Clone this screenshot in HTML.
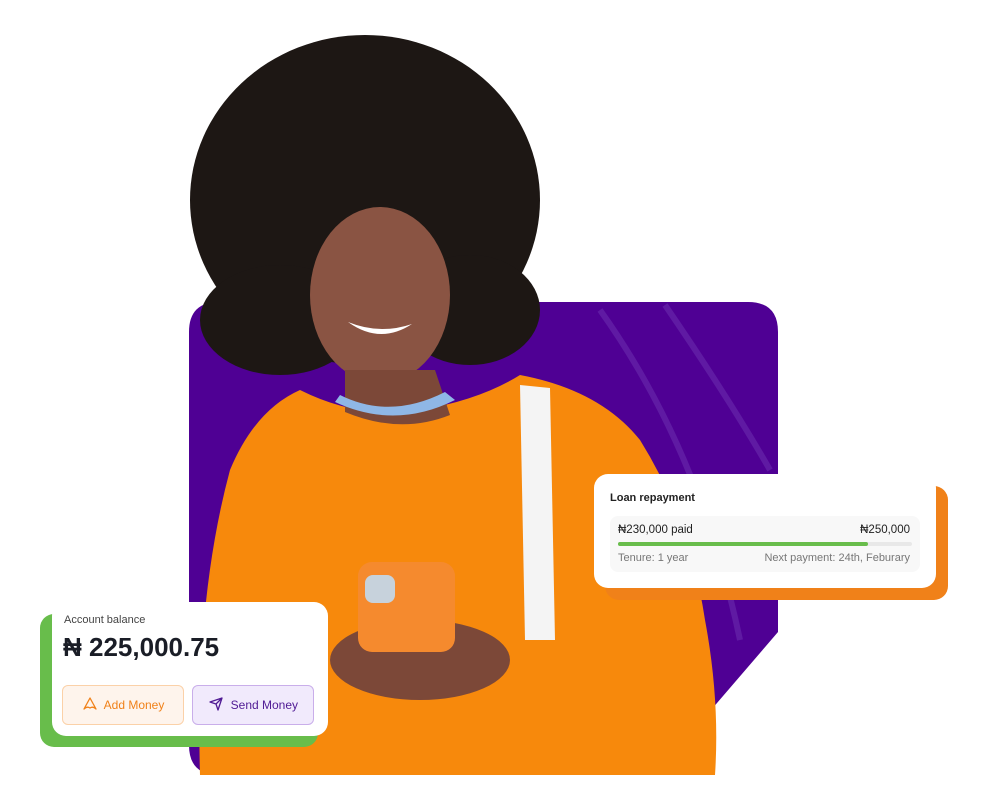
<!DOCTYPE html>
<html><head><style>
body{margin:0;width:999px;height:789px;background:#fff;position:relative;overflow:hidden;font-family:"Liberation Sans",sans-serif}
.a{position:absolute}
</style></head><body>
<svg class="a" style="left:0;top:0" width="999" height="789">
<path d="M219 302 H748 Q778 302 778 332 V632 L668 760 Q656 775 640 775 H219 Q189 775 189 745 V332 Q189 302 219 302Z" fill="#4f0094"/>
<path d="M600 310 Q700 450 740 640" stroke="#6a2cad" stroke-width="6" fill="none" opacity=".6"/>
<path d="M665 305 Q730 400 770 470" stroke="#6a2cad" stroke-width="6" fill="none" opacity=".6"/>
<path d="M300 390 Q360 420 420 410 Q480 400 520 375 Q600 390 640 440 Q690 520 705 620 Q720 700 715 775 H200 Q195 600 230 470 Q255 410 300 390Z" fill="#f7890c"/>
<path d="M520 385 L550 388 L555 640 L525 640Z" fill="#f4f4f4"/>
<ellipse cx="365" cy="200" rx="175" ry="165" fill="#1d1714"/>
<ellipse cx="280" cy="320" rx="80" ry="55" fill="#1d1714"/>
<ellipse cx="470" cy="310" rx="70" ry="55" fill="#1d1714"/>
<ellipse cx="380" cy="295" rx="70" ry="88" fill="#8a5443"/>
<path d="M348 322 Q380 345 412 324 Q380 335 348 322Z" fill="#fff"/>
<path d="M345 370 L435 370 L450 415 Q400 435 345 412Z" fill="#7c4838"/>
<path d="M340 395 Q390 420 445 392 L455 400 Q395 430 335 402Z" fill="#8fb7e6"/>
<ellipse cx="420" cy="660" rx="90" ry="40" fill="#7c4838"/>
<rect x="358" y="562" width="97" height="90" rx="14" fill="#f58a2e"/>
<rect x="365" y="575" width="30" height="28" rx="8" fill="#c7d2dc"/>
<rect x="40" y="614" width="278" height="133" rx="14" fill="#68bd4b"/>
<rect x="605" y="486" width="343" height="114" rx="14" fill="#f08119"/>
</svg>
<div class="a" style="left:52px;top:602px;width:276px;height:134px;background:#fff;border-radius:14px">
<div class="a" style="left:12px;top:12px;font-size:11px;color:#444">Account balance</div>
<div class="a" style="left:11px;top:30px;font-size:26px;font-weight:bold;color:#1a1d26">₦ 225,000.75</div>
<div class="a" style="left:10px;top:83px;width:120px;height:38px;border:1px solid #fbd1a8;background:#fef4ec;border-radius:6px;color:#f08119;font-size:12px;line-height:38px;text-align:center"><svg width="16" height="16" viewBox="0 0 16 16" style="vertical-align:-3px"><path d="M8 2 L14 13 Q11 10 8 12 Q5 10 2 13 Z" fill="none" stroke="#f08119" stroke-width="1.3" stroke-linejoin="round"/></svg>&nbsp; Add Money</div>
<div class="a" style="left:140px;top:83px;width:120px;height:38px;border:1px solid #c9aeea;background:#f1eafc;border-radius:6px;color:#4f1a94;font-size:12px;line-height:38px;text-align:center"><svg width="16" height="16" viewBox="0 0 16 16" style="vertical-align:-3px"><path d="M2 6 L14 2 L10 14 L8 8 Z M8 8 L14 2" fill="none" stroke="#4f1a94" stroke-width="1.3" stroke-linejoin="round"/></svg>&nbsp; Send Money</div>
</div>
<div class="a" style="left:594px;top:474px;width:342px;height:114px;background:#fff;border-radius:14px">
<div class="a" style="left:16px;top:18px;font-size:11px;font-weight:bold;color:#222">Loan repayment</div>
<div class="a" style="left:16px;top:42px;width:310px;height:56px;background:#f8f8f8;border-radius:8px">
<div class="a" style="left:8px;top:8px;font-size:11.5px;color:#222">₦230,000 paid</div>
<div class="a" style="right:10px;top:8px;font-size:11.5px;color:#222">₦250,000</div>
<div class="a" style="left:8px;top:26px;width:294px;height:4px;background:#e8e8e8;border-radius:2px"><div style="width:85%;height:4px;background:#68bd4b;border-radius:2px"></div></div>
<div class="a" style="left:8px;top:36px;font-size:11px;color:#777">Tenure: 1 year</div>
<div class="a" style="right:10px;top:36px;font-size:11px;color:#777">Next payment: 24th, Feburary</div>
</div></div>
</body></html>
